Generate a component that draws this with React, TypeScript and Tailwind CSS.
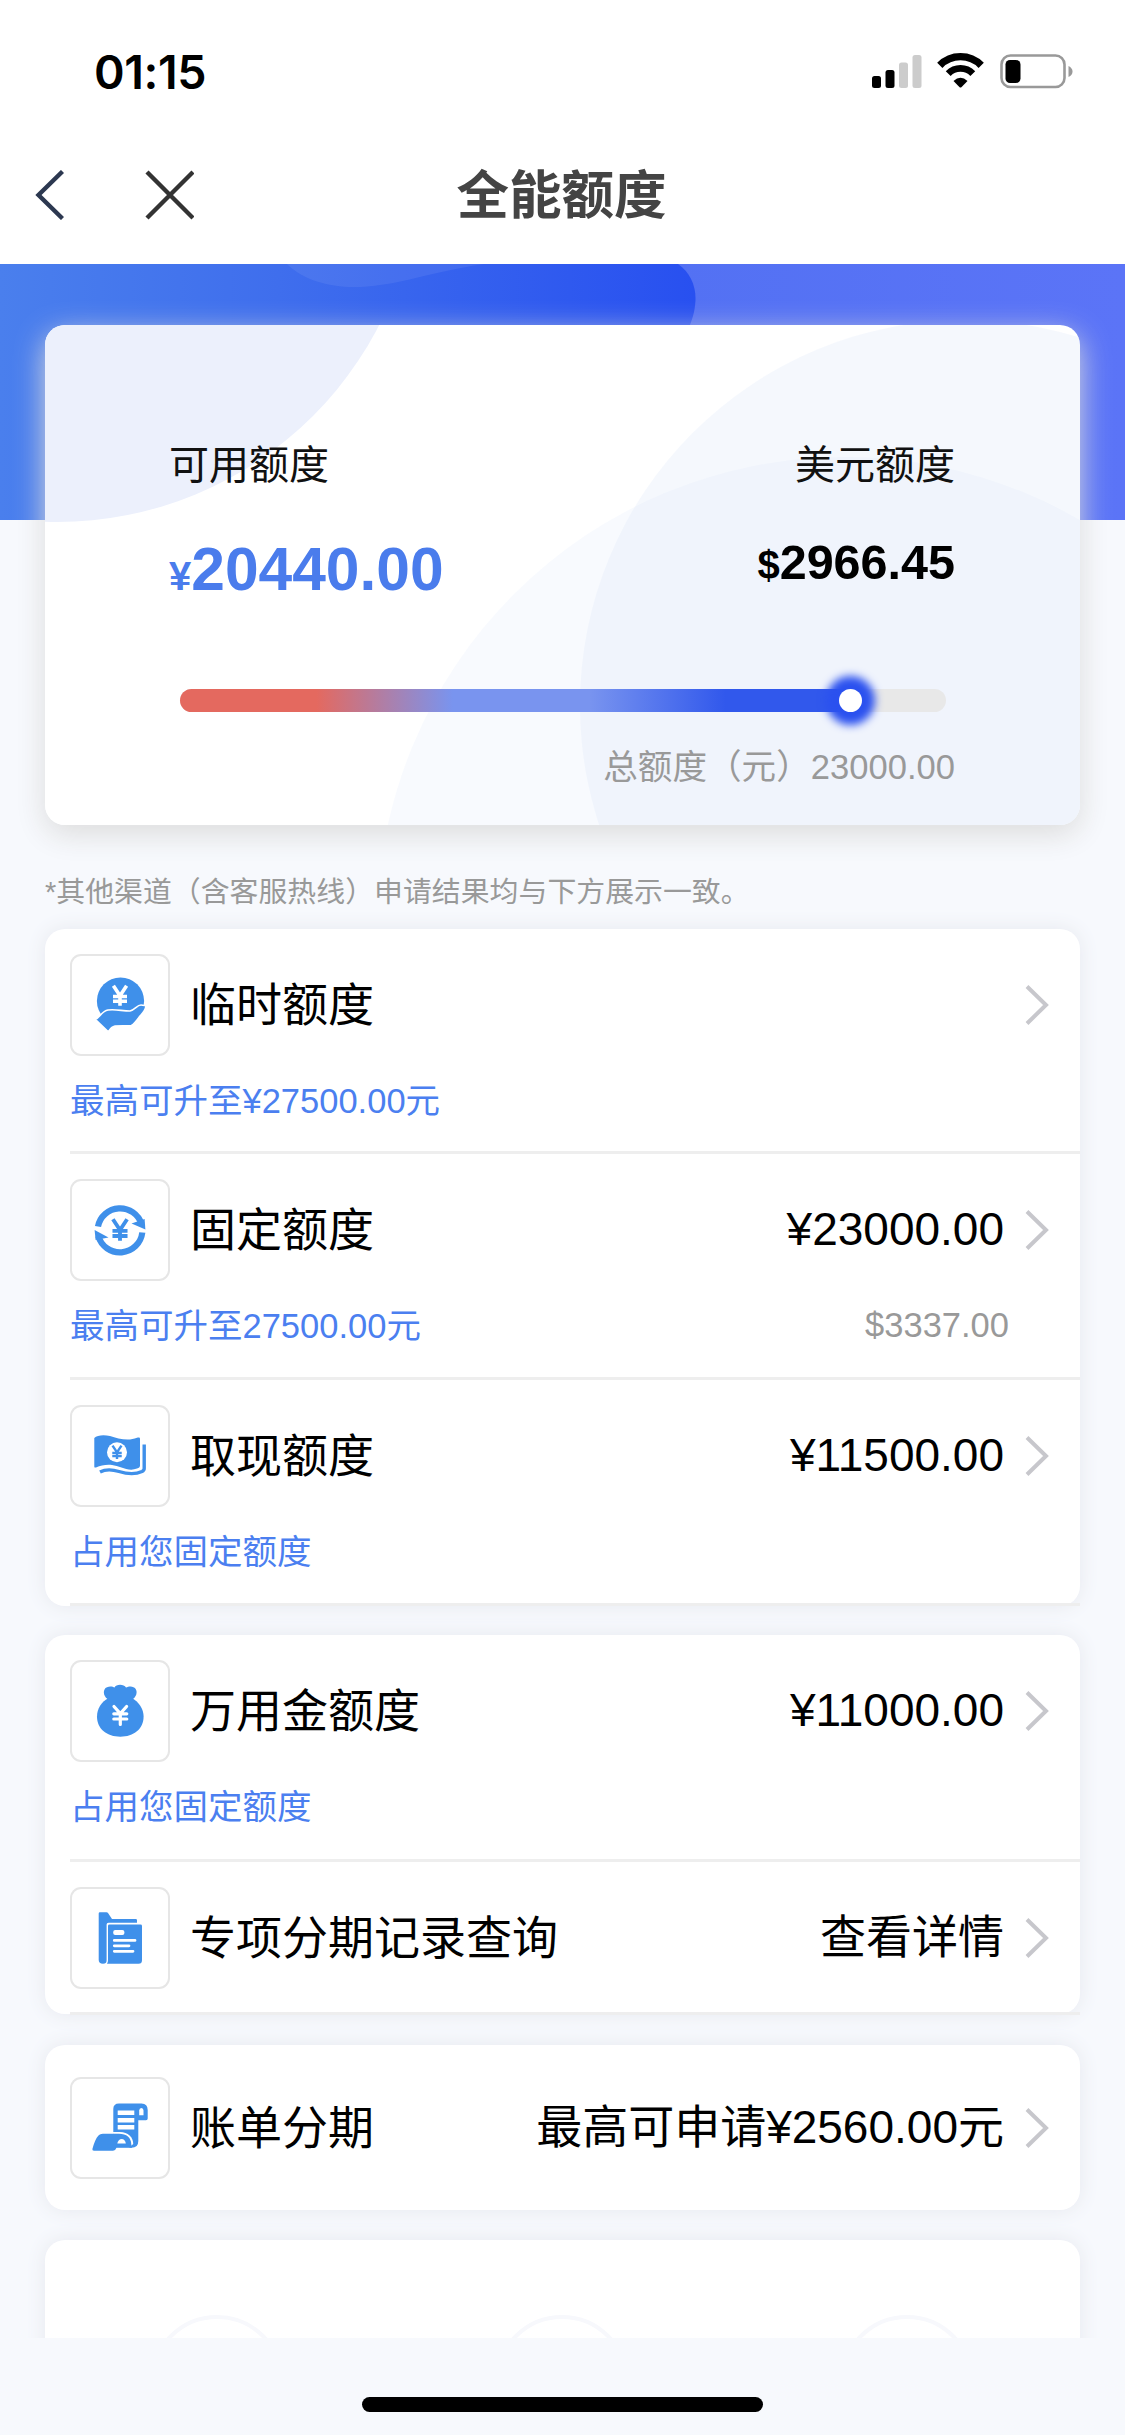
import React from 'react';

type RowProps = {
  icon: React.ReactNode;
  title: string;
  value?: string;
  note?: string;
  subValue?: string;
};

const BLUE = '#3f90ea';

function Yen({ x, y, size, color }: { x: number; y: number; size: number; color: string }) {
  return (
    <g transform={`translate(${x} ${y}) scale(${size / 20})`} stroke={color} strokeWidth="3.6" fill="none">
      <path d="M-6.6 -10 L0 0 L6.6 -10 M0 -1 V10 M-7 0.8 H7 M-7 5.6 H7" />
    </g>
  );
}

function HandCoinIcon() {
  return (
    <svg viewBox="0 0 100 102" className="h-full w-full">
      <circle cx="50.5" cy="47" r="23.6" fill={BLUE} />
      <Yen x={50} y={41.7} size={20} color="#fff" />
      <path
        d="M25.5 65.5 C30 63 32 57 38 56 C46 55 52 57 60 57 C65 56 67 51 71 51 C73 51 74.5 51.5 76 51.7 C75.5 57 72 60 70 62 C67 66 65 69 61.5 71.5 L45 72 C42 72.5 40 75 38.3 77.8 Z"
        fill={BLUE}
        stroke="#fff"
        strokeWidth="1.6"
      />
    </svg>
  );
}

function CycleIcon() {
  return (
    <svg viewBox="0 0 100 102" className="h-full w-full">
      <path d="M28 47.5 A22.5 22.5 0 0 1 71.5 45" fill="none" stroke={BLUE} strokeWidth="6.2" />
      <path d="M61.5 44.5 L74.6 40 L75.4 50.5 Z" fill={BLUE} />
      <path d="M72.3 53.5 A22.5 22.5 0 0 1 28.3 57" fill="none" stroke={BLUE} strokeWidth="6.2" />
      <path d="M24.6 51 L38.5 58.5 L25.6 61 Z" fill={BLUE} />
      <Yen x={50} y={51} size={21.5} color={BLUE} />
    </svg>
  );
}

function BanknoteIcon() {
  return (
    <svg viewBox="0 0 100 102" className="h-full w-full" fill={BLUE}>
      <path d="M24.3 33 C27 30 34 29.5 40 31 C48 33.5 58 36.5 67 32.8 C69 32.2 70 32.5 70 34 V60.5 C70 62 69 63 67 63.6 C58 67 50 61 42 60 C36 59.3 31 60.5 26 62.5 C25 62.8 24.3 62.4 24.3 61.4 Z" />
      <path
        d="M30 67 C36 63.8 42 64.3 49 66.5 C58 69.3 66 69.3 72 66.5 C73.8 65.6 74.2 65 74.2 63.5 V39.5"
        fill="none"
        stroke={BLUE}
        strokeWidth="3.4"
      />
      <circle cx="47" cy="47.3" r="10" fill="#fff" />
      <Yen x={47} y={47.3} size={13.5} color={BLUE} />
    </svg>
  );
}

function MoneyBagIcon() {
  return (
    <svg viewBox="0 0 100 102" className="h-full w-full" fill={BLUE}>
      <path d="M37.5 39 C33 36 32.5 29 37 27.3 C40 26 43 26.8 44.5 27.6 C46 23.8 54 23.8 56 27.6 C58 26.8 61 26 63.5 27.3 C68 29 67.5 36 63 39 Z" />
      <path d="M38.5 38 C31 42 27 49 27 56.5 C27 69 37 76.7 50.3 76.7 C63.5 76.7 73.6 69 73.6 56.5 C73.6 49 69 42 62 38 Z" />
      <g stroke="#fff" strokeWidth="3.2" strokeLinecap="round" fill="none">
        <path d="M44 46.5 L50.3 53.5 L56.6 46.5 M50.3 53.5 V64.5 M43.8 53.8 H56.8 M43.8 59 H56.8" />
      </g>
    </svg>
  );
}

function FolderDocIcon() {
  return (
    <svg viewBox="0 0 100 102" className="h-full w-full" fill={BLUE}>
      <path d="M28.7 26.5 Q28.7 25.3 29.9 25.3 H36.5 Q37.5 25.3 38 26 L42 32 H65.8 Q67 32 67 33.2 V35.8 H38.5 Q36.6 35.8 36.6 37.6 V73.5 Q36.6 76.7 33 76.7 Q28.7 76.7 28.7 73 Z" />
      <path d="M39.5 37.6 H70.5 Q72 37.6 72 39 V73.2 Q72 76.7 68.5 76.7 H37 Q38 75.5 38 73 V39 Q38 37.6 39.5 37.6 Z" />
      <rect x="43.2" y="43" width="11.2" height="5" rx="2" fill="#fff" />
      <path d="M44.3 53.4 H65 M44.3 58.8 H59 M44.3 64.3 H63" stroke="#fff" strokeWidth="2.8" strokeLinecap="round" />
    </svg>
  );
}

function BillIcon() {
  return (
    <svg viewBox="0 0 100 102" className="h-full w-full" fill={BLUE}>
      <path d="M43.3 57 V32 Q43.3 26.5 49 26.5 H71.5 Q77.7 26.5 77.7 33 V41.5 Q77.7 43.2 76 43.2 H68.3 V64 Q68.3 70.8 61.5 70.8 H45 Z" />
      <path d="M69.2 38.2 V33.5 Q69.2 31 71.4 31 Q73.5 31 73.5 33.5 V38.2 Z" fill="#fff" />
      <path d="M47.7 35.8 H64.3 M47.7 43.2 H64.3 M47.7 50.3 H64.3" stroke="#fff" strokeWidth="4.5" />
      <path d="M43 55 H50 C58 55 63.2 60 63.2 67 L59 70.8 H44 Z" fill="#fff" />
      <path d="M22.4 72 C24 66 26 61 28.5 58.5 C30.3 56.9 32 56.7 35 56.7 H49 C56.5 56.7 61.3 60.5 61.3 67.5 L62 70.8 H46.5 Q45.5 73.7 43 73.7 H24 Q22 73.7 22.4 72 Z" />
      <path d="M47.3 66.6 C48 60.3 55.5 60.3 55.8 66.6 Z" fill="#fff" />
    </svg>
  );
}

function Chevron() {
  return (
    <svg viewBox="0 0 24 42" className="h-[42px] w-6 shrink-0" fill="none">
      <path d="M2 2.5 L21 21 L2 39.5" stroke="#c7c7cc" strokeWidth="4" />
    </svg>
  );
}

function StatusBar() {
  return (
    <div className="flex h-[132px] items-start justify-between pl-[94px] pr-[51px] pt-[44px]">
      <span className="font-['Inter'] text-[46.5px] font-semibold leading-[56px] tracking-[-0.4px] text-black">01:15</span>
      <svg viewBox="0 0 202 40" className="mt-[6px] h-10 w-[202px]">
        <rect x="0" y="26" width="9" height="12" rx="2.5" fill="#000" />
        <rect x="13.5" y="20" width="9" height="18" rx="2.5" fill="#000" />
        <rect x="27" y="12.5" width="9" height="25.5" rx="2.5" fill="#ccc" />
        <rect x="40.5" y="5" width="9" height="33" rx="2.5" fill="#ccc" />
        <g transform="translate(88.5 0)">
          <path d="M-20.7 15.3 A29 29 0 0 1 20.7 15.3" fill="none" stroke="#000" strokeWidth="7.4" />
          <path d="M-12.3 23.6 A17.2 17.2 0 0 1 12.3 23.6" fill="none" stroke="#000" strokeWidth="6.8" />
          <path d="M-7 31 Q0 24.6 7 31 L0.9 37.2 Q0 38 -0.9 37.2 Z" fill="#000" />
        </g>
        <rect x="129.5" y="5.5" width="63" height="31.5" rx="9" fill="none" stroke="#999" strokeWidth="2.6" />
        <rect x="133.5" y="10" width="15" height="23" rx="4.5" fill="#000" />
        <path d="M196.5 16 Q200.5 18 200.5 21.5 Q200.5 25 196.5 27 Z" fill="#999" />
      </svg>
    </div>
  );
}

function NavBar() {
  return (
    <div className="grid h-[132px] grid-cols-[1fr_auto_1fr] items-center px-[34px] pb-[6px]">
      <div className="flex items-center gap-20">
        <svg viewBox="0 0 30 50" className="h-[50px] w-[30px]" fill="none">
          <path d="M28.5 1.5 L4.5 25 L28.5 48.5" stroke="#2c3850" strokeWidth="4.4" />
        </svg>
        <svg viewBox="0 0 50 50" className="h-[50px] w-[50px]" fill="none">
          <path d="M3 2 L49 48 M49 2 L3 48" stroke="#333" strokeWidth="4.4" />
        </svg>
      </div>
      <h1 className="pr-[2px] pt-[3px] text-[52.5px] font-bold leading-none text-[#444]">全能额度</h1>
      <div />
    </div>
  );
}

function BannerBackdrop() {
  return (
    <svg viewBox="0 0 1125 256" className="absolute left-0 top-0 h-[256px] w-full">
      <defs>
        <linearGradient id="bannerRight" x1="0" x2="1">
          <stop offset="0.6" stopColor="#5371f3" />
          <stop offset="1" stopColor="#5b74f7" />
        </linearGradient>
        <linearGradient id="bannerLeft" x1="0" x2="1">
          <stop offset="0" stopColor="#4a7fed" />
          <stop offset="0.4" stopColor="#3f6eed" />
          <stop offset="1" stopColor="#2850f0" />
        </linearGradient>
      </defs>
      <rect width="1125" height="256" fill="url(#bannerRight)" />
      <path d="M0 0 H678 C690 8 696 22 695.5 36 C695 48 692 56 688 66 L600 256 H0 Z" fill="url(#bannerLeft)" />
      <path d="M287 0 C303 16 330 24 360 23 C400 21 430 8 484 0 Z" fill="#fff" fillOpacity="0.07" />
    </svg>
  );
}

function QuotaCard() {
  return (
    <section className="relative mx-[45px] h-[500px] overflow-hidden rounded-[20px] bg-white">
      <svg viewBox="0 0 1035 500" className="absolute inset-0 h-full w-full">
        <circle cx="12" cy="-165" r="362" fill="#ecf0fc" />
        <circle cx="920" cy="380" r="385" fill="#dbe6f9" fillOpacity="0.27" />
        <circle cx="800" cy="600" r="468" fill="#dbe6fb" fillOpacity="0.2" />
      </svg>
      <div className="relative pl-[124px] pr-[125px] pt-[110px]">
        <div className="flex justify-between text-[40px] leading-[60px] text-[#111]">
          <span>可用额度</span>
          <span>美元额度</span>
        </div>
        <div className="mt-[34px] flex items-start justify-between font-bold leading-[80px]">
          <span className="whitespace-nowrap text-[60.5px] text-[#4a7cec]">
            <span className="text-[40px]">¥</span>20440.00
          </span>
          <span className="mt-[-7px] whitespace-nowrap text-[48.5px] text-black">
            <span className="text-[40px]">$</span>2966.45
          </span>
        </div>
        <div className="ml-[11px] mr-[9px] mt-[73px] flex h-[23px] rounded-full bg-[#e8e8e8]">
          <div className="flex w-[682px] justify-end rounded-full bg-[linear-gradient(90deg,#e4695f_0%,#e4695f_20%,#7994ef_40%,#7994ef_60%,#3158ec_80%,#3158ec_100%)]">
            <div className="h-[23px] w-[23px] rounded-full bg-white shadow-[0_0_9px_13px_#2b51ef]" />
          </div>
        </div>
        <p className="mt-[30px] text-right text-[34.6px] leading-[50px] text-[#999]">总额度（元）23000.00</p>
      </div>
    </section>
  );
}

function Row({ icon, title, value, note, subValue }: RowProps) {
  return (
    <div className="pl-[25px]">
      <div className="flex h-[102px] items-center pr-[31px] text-[46px] text-black">
        <div className="h-[102px] w-[100px] shrink-0 rounded-[11px] shadow-[inset_0_0_0_2px_#e6e6e6]">{icon}</div>
        <span className="ml-5 whitespace-nowrap leading-none">{title}</span>
        <span className="mb-[2px] ml-auto mr-[21px] whitespace-nowrap leading-none">{value}</span>
        <Chevron />
      </div>
      {note && (
        <div className="mt-5 flex h-[52px] items-center justify-between pr-[71px] text-[34.5px]">
          <span className="text-[#4b7ff0]">{note}</span>
          <span className="mb-[2px] text-[#999]">{subValue}</span>
        </div>
      )}
    </div>
  );
}

function Divider() {
  return <div className="ml-[25px] h-[3px] bg-[#eee]" />;
}

const cardClass = 'mx-[45px] rounded-[20px] bg-white shadow-[0_0_20px_#e6e8ee]';

export default function App() {
  return (
    <div className="flex h-[2435px] w-[1125px] flex-col overflow-hidden bg-[#f7f9fd] font-['Liberation_Sans','Noto_Sans_CJK_SC',sans-serif]">
      <header className="h-[264px] shrink-0 bg-white">
        <StatusBar />
        <NavBar />
      </header>

      <main className="relative h-[2074px] shrink-0 overflow-hidden pt-[61px]">
        <BannerBackdrop />
        <div className="relative">
          <div className="absolute inset-x-[45px] inset-y-0 rounded-[20px] shadow-[0_9px_30px_#dcdcdc]" />
          <QuotaCard />
        </div>

        <p className="ml-[45px] mt-[45px] h-[44px] whitespace-nowrap text-[28.9px] leading-[44px] text-[#999]">
          *其他渠道（含客服热线）申请结果均与下方展示一致。
        </p>

        <section className={`${cardClass} mt-[15px] h-[677px]`}>
          <div className="h-[222px] pt-[25px]">
            <Row icon={<HandCoinIcon />} title="临时额度" note="最高可升至¥27500.00元" />
          </div>
          <Divider />
          <div className="h-[223px] pt-[25px]">
            <Row icon={<CycleIcon />} title="固定额度" value="¥23000.00" note="最高可升至27500.00元" subValue="$3337.00" />
          </div>
          <Divider />
          <div className="h-[223px] pt-[25px]">
            <Row icon={<BanknoteIcon />} title="取现额度" value="¥11500.00" note="占用您固定额度" />
          </div>
          <Divider />
        </section>

        <section className={`${cardClass} mt-[29px] h-[379px]`}>
          <div className="h-[224px] pt-[25px]">
            <Row icon={<MoneyBagIcon />} title="万用金额度" value="¥11000.00" note="占用您固定额度" />
          </div>
          <Divider />
          <div className="h-[150px] pt-[25px]">
            <Row icon={<FolderDocIcon />} title="专项分期记录查询" value="查看详情" />
          </div>
          <Divider />
        </section>

        <section className={`${cardClass} mt-[31px] h-[165px] pt-[32px]`}>
          <Row icon={<BillIcon />} title="账单分期" value="最高可申请¥2560.00元" />
        </section>

        <section className={`${cardClass} mt-[30px] flex h-[240px] gap-[211px] pl-[105px] pt-[75px]`}>
          <div className="h-[134px] w-[134px] rounded-full border-4 border-[#f7f8fc]" />
          <div className="h-[134px] w-[134px] rounded-full border-4 border-[#f7f8fc]" />
          <div className="h-[134px] w-[134px] rounded-full border-4 border-[#f7f8fc]" />
        </section>
      </main>

      <footer className="flex h-[97px] justify-center pt-[59px]">
        <div className="h-[15px] w-[401px] rounded-full bg-black" />
      </footer>
    </div>
  );
}
